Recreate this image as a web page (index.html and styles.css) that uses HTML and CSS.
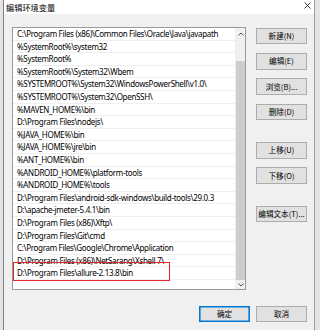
FILE: index.html
```html
<!DOCTYPE html>
<html lang="zh-CN">
<head>
  <meta charset="UTF-8">
  <title>编辑环境变量</title>
  <link rel="stylesheet" href="styles.css">
</head>
<body>
  <div class="window">
    <div class="titlebar">
      <span class="title">编辑环境变量</span>
      <svg class="close" width="7" height="7" viewBox="0 0 7 7">
        <path d="M0.5 0.5 L6.5 6.5 M6.5 0.5 L0.5 6.5" stroke="#222" stroke-width="0.9" fill="none"/>
      </svg>
    </div>

    <div class="content">
      <div class="list">
        <ul class="rows">
          <li>C:\Program Files (x86)\Common Files\Oracle\Java\javapath</li>
          <li>%SystemRoot%\system32</li>
          <li>%SystemRoot%</li>
          <li>%SystemRoot%\System32\Wbem</li>
          <li>%SYSTEMROOT%\System32\WindowsPowerShell\v1.0\</li>
          <li>%SYSTEMROOT%\System32\OpenSSH\</li>
          <li>%MAVEN_HOME%\bin</li>
          <li>D:\Program Files\nodejs\</li>
          <li>%JAVA_HOME%\bin</li>
          <li>%JAVA_HOME%\jre\bin</li>
          <li>%ANT_HOME%\bin</li>
          <li>%ANDROID_HOME%\platform-tools</li>
          <li>%ANDROID_HOME%\tools</li>
          <li>D:\Program Files\android-sdk-windows\build-tools\29.0.3</li>
          <li>D:\apache-jmeter-5.4.1\bin</li>
          <li>D:\Program Files (x86)\Xftp\</li>
          <li>D:\Program Files\Git\cmd</li>
          <li>C:\Program Files\Google\Chrome\Application</li>
          <li>D:\Program Files (x86)\NetSarang\Xshell 7\</li>
          <li>D:\Program Files\allure-2.13.8\bin</li>
        </ul>
        <div class="scrollbar">
          <span class="arrow">
            <svg width="6" height="4" viewBox="0 0 6 4"><path d="M0.5 3.5 L3 1 L5.5 3.5" stroke="#555" stroke-width="1" fill="none"/></svg>
          </span>
          <div class="track-space"></div>
          <div class="thumb"></div>
          <span class="arrow down">
            <svg width="6" height="4" viewBox="0 0 6 4"><path d="M0.5 0.5 L3 3 L5.5 0.5" stroke="#555" stroke-width="1" fill="none"/></svg>
          </span>
        </div>
        <div class="highlight"></div>
      </div>

      <div class="buttons">
        <button class="btn">新建(N)</button>
        <button class="btn">编辑(E)</button>
        <button class="btn">浏览(B)...</button>
        <button class="btn">删除(D)</button>
        <button class="btn spaced">上移(U)</button>
        <button class="btn">下移(O)</button>
        <button class="btn spaced">编辑文本(T)...</button>
      </div>
    </div>

    <div class="footer">
      <button class="btn default">确定</button>
      <button class="btn">取消</button>
    </div>
  </div>
</body>
</html>
```

FILE: styles.css
```css
body {
  margin: 0;
  width: 320px;
  height: 330px;
  overflow: hidden;
  background-color: #e4e4e4;
  font-family: "Noto Sans", "Noto Sans CJK SC", sans-serif;
  color: #000;
}
.window {
  margin-left: 3px;
  width: 312px;
  height: 330px;
  box-sizing: border-box;
  border-left: 1px solid #7d7d7d;
  border-right: 1px solid #9c9c9c;
  background: #f0f0f0;
}
.titlebar {
  height: 14px;
  background: #fff;
  display: flex;
  align-items: center;
  justify-content: space-between;
  padding: 0 3px 0 2px;
}
.title {
  font-family: "Noto Sans CJK SC", sans-serif;
  font-size: 8.2px;
  line-height: 14px;
}
.close {
  margin-top: -3px;
}
.content {
  display: flex;
  padding: 13px 0 0 8px;
}
.list {
  position: relative;
  width: 234px;
  height: 263px;
  box-sizing: border-box;
  border: 1px solid #9a9a9a;
  background: #fff;
  display: flex;
}
.rows {
  flex: 1;
  list-style: none;
  margin: 0;
  padding: 0;
}
.rows li {
  height: 12.6px;
  line-height: 12.6px;
  box-sizing: border-box;
  border-bottom: 1px solid #efefef;
  padding-left: 4px;
  font-size: 8px;
  letter-spacing: -0.32px;
  white-space: nowrap;
  overflow: hidden;
}
.scrollbar {
  width: 10px;
  display: flex;
  flex-direction: column;
  background: #f0f0f0;
}
.arrow {
  height: 11px;
  display: flex;
  align-items: center;
  justify-content: center;
  padding-left: 1px;
}
.arrow.down {
  height: 9px;
}
.track-space {
  height: 22px;
}
.thumb {
  flex: 1;
  margin-left: 1px;
  background: #cdcdcd;
}
.highlight {
  position: absolute;
  left: 0;
  top: 234px;
  width: 157px;
  height: 19px;
  box-sizing: border-box;
  border: 1.5px solid #e2262c;
}
.buttons {
  margin-left: 10px;
  width: 51px;
  padding-top: 0.7px;
  display: flex;
  flex-direction: column;
  gap: 8.8px;
}
.btn {
  height: 16.6px;
  width: 51px;
  box-sizing: border-box;
  padding: 0;
  border: 1px solid #adadad;
  background: #e1e1e1;
  color: #000;
  font-family: "Noto Sans CJK SC", sans-serif;
  font-size: 7.6px;
  line-height: 14px;
  white-space: nowrap;
}
.btn.spaced {
  margin-top: 12.8px;
}
.footer {
  display: flex;
  justify-content: flex-end;
  gap: 6px;
  padding-right: 7px;
  margin-top: 15.7px;
}
.btn.default {
  border: 1px solid #0078d7;
  box-shadow: inset 0 0 0 0.6px #0078d7;
}
```
